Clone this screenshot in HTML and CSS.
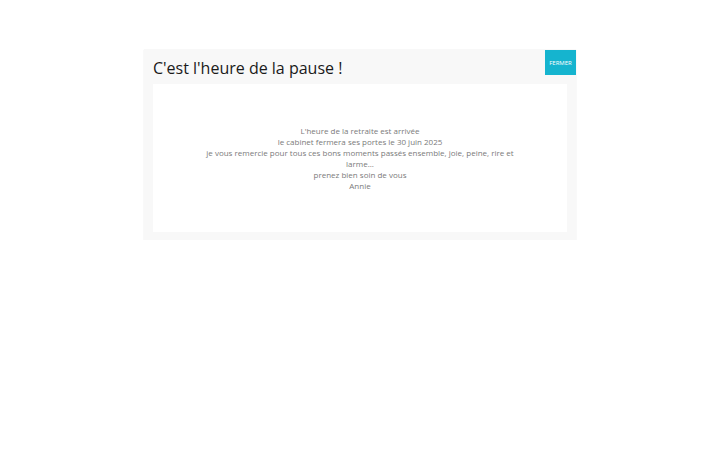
FILE: index.html
```html
<!DOCTYPE html>
<html lang="fr">
<head>
<meta charset="utf-8">
<title>C'est l'heure de la pause !</title>
<link rel="stylesheet" href="styles.css">
</head>
<body>
<div class="page">
  <div class="modal">
    <div class="modal-head">
      <h1 class="title">C'est l'heure de la pause !</h1>
      <button class="close">FERMER</button>
    </div>
    <div class="modal-body">
      <p class="msg">L'heure de la retraite est arrivée<br>le cabinet fermera ses portes le 30 juin 2025<br>je vous remercie pour tous ces bons moments passés ensemble, joie, peine, rire et larme...<br>prenez bien soin de vous<br>Annie</p>
    </div>
  </div>
</div>
</body>
</html>
```
FILE: styles.css
```css
html, body {
  margin: 0;
  padding: 0;
  background: #ffffff;
  font-family: "Open Sans", "Liberation Sans", sans-serif;
}
.page {
  display: flex;
  justify-content: center;
  padding-top: 49px;
}
.modal {
  width: 432px;
  background: #f8f8f8;
  box-shadow: 0 1px 1px rgba(0,0,0,0.14);
  padding: 0 9px 8px 9px;
  box-sizing: border-box;
}
.modal-head {
  display: flex;
  justify-content: space-between;
  align-items: flex-start;
  height: 35px;
  margin-right: -9px;
}
.title {
  margin: 8px 0 0 0;
  font-size: 16px;
  font-weight: 400;
  color: #1a1a1a;
  line-height: 22px;
}
.close {
  margin-top: 1px;
  width: 31px;
  height: 25px;
  border: 0;
  padding: 0;
  background: #15b4cf;
  color: #ffffff;
  font-family: "Open Sans", "Liberation Sans", sans-serif;
  font-size: 6px;
  letter-spacing: 0;
}
.modal-body {
  background: #ffffff;
  padding: 0 48px;
  height: 148px;
  box-sizing: border-box;
  display: flex;
  align-items: center;
  justify-content: center;
}
.msg {
  margin: 0;
  text-align: center;
  font-size: 8px;
  line-height: 11px;
  color: #7a7a7a;
}
```
